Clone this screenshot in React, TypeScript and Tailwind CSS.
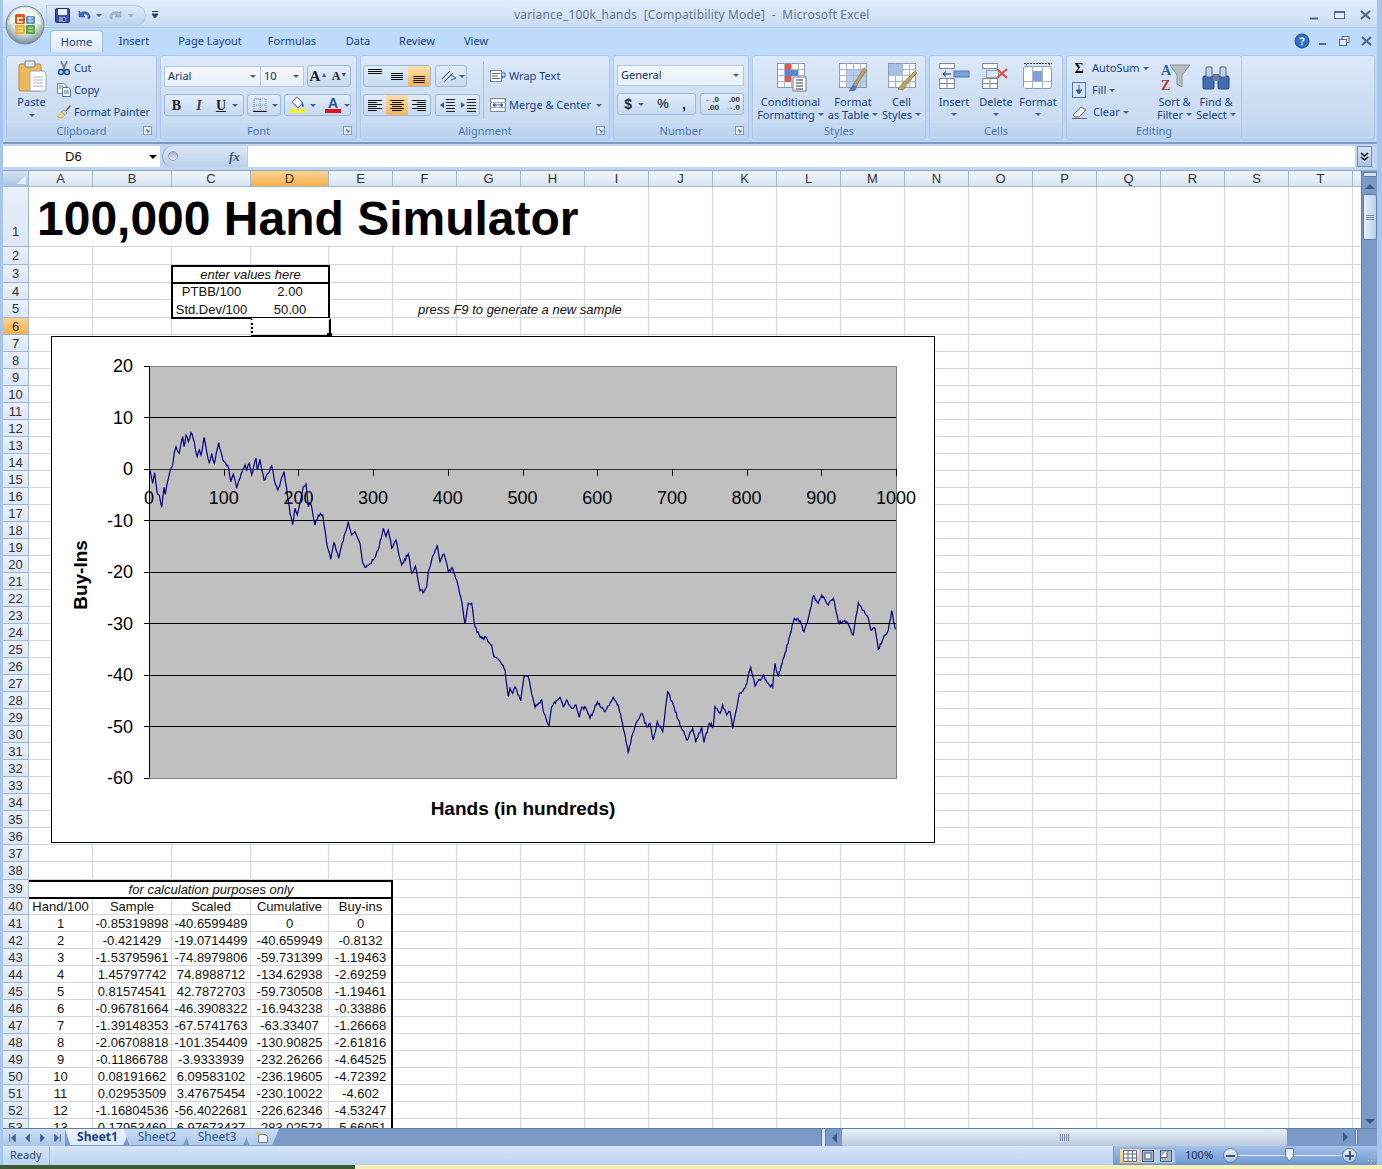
import type { ReactNode } from "react";

const UI = "[font-family:'Noto_Sans',sans-serif]";
const COLS: [string, number][] = [
  ["A", 64], ["B", 79], ["C", 79], ["D", 78], ["E", 64], ["F", 64], ["G", 64], ["H", 64], ["I", 64], ["J", 64],
  ["K", 64], ["L", 64], ["M", 64], ["N", 64], ["O", 64], ["P", 64], ["Q", 64], ["R", 64], ["S", 64], ["T", 64],
];

const rowHeight = (r: number) => {
  if (r === 1) return 60;
  if ([2, 3, 5, 38, 39].includes(r)) return 18;
  return 17;
};

const TABLE: string[][] = [
  ["1", "-0.85319898", "-40.6599489", "0", "0"],
  ["2", "-0.421429", "-19.0714499", "-40.659949", "-0.8132"],
  ["3", "-1.53795961", "-74.8979806", "-59.731399", "-1.19463"],
  ["4", "1.45797742", "74.8988712", "-134.62938", "-2.69259"],
  ["5", "0.81574541", "42.7872703", "-59.730508", "-1.19461"],
  ["6", "-0.96781664", "-46.3908322", "-16.943238", "-0.33886"],
  ["7", "-1.39148353", "-67.5741763", "-63.33407", "-1.26668"],
  ["8", "-2.06708818", "-101.354409", "-130.90825", "-2.61816"],
  ["9", "-0.11866788", "-3.9333939", "-232.26266", "-4.64525"],
  ["10", "0.08191662", "6.09583102", "-236.19605", "-4.72392"],
  ["11", "0.02953509", "3.47675454", "-230.10022", "-4.602"],
  ["12", "-1.16804536", "-56.4022681", "-226.62346", "-4.53247"],
  ["13", "0.17953469", "6.97673437", "-283.02573", "-5.66051"],
];

const cellText: Record<string, string> = {
  C4: "PTBB/100", D4: "2.00", C5: "Std.Dev/100", D5: "50.00",
  A40: "Hand/100", B40: "Sample", C40: "Scaled", D40: "Cumulative", E40: "Buy-ins",
};
TABLE.forEach((row, i) => row.forEach((v, c) => (cellText["ABCDE"[c] + (41 + i)] = v)));

// zoomed trace of the series, left part (x = 140 + zx/3, y = 400 + zy/3)
const LEFT = [30,210,38,250,44,218,52,280,58,285,65,322,72,262,76,283,84,240,92,205,98,195,103,158,108,140,118,160,128,110,132,140,138,105,145,125,153,98,160,118,172,170,178,150,183,165,192,112,200,155,208,188,215,160,223,190,236,128,248,178,266,205,272,245,280,222,290,265,300,235,315,195,320,210,328,190,335,225,348,175,352,210,360,178,372,240,385,220,395,198,403,240,413,272,432,215,440,265,450,340,458,375,465,325,472,345,482,300,490,260,498,252,505,320,512,310,525,375,535,345,548,345,562,440,572,478,582,428,596,475,615,400,625,365,635,405,645,395,652,412,660,430,668,490,678,502,700,480,715,450,730,385,738,410,745,390,755,445,768,420,778,470,785,495,805,462,815,520,826,498,840,572,852,575,860,560,865,515,880,465,892,435,900,485,912,462,925,515,938,505,950,540,962,590,975,672,985,610,995,610,1005,680,1020,712,1040,715,1055,735,1062,770,1075,778];
// right part (x = 500 + zx/3, y = 580 + zy/3)
const RIGHT = [0,243,15,270,25,350,30,325,38,340,45,320,62,362,72,290,85,290,92,325,105,382,125,360,130,395,147,440,155,380,180,352,190,380,200,360,215,385,228,375,238,412,245,382,258,385,270,415,280,395,292,365,315,395,340,352,355,375,365,420,385,520,395,470,408,430,425,400,440,440,450,430,460,480,472,425,488,455,503,335,520,375,540,435,562,480,578,445,587,487,605,440,612,487,628,430,640,440,645,380,660,400,668,375,680,405,690,395,698,445,710,385,718,340,735,325,752,262,765,318,790,285,805,310,818,322,825,250,835,290,855,220,870,165,883,115,900,122,912,155,925,115,940,48,955,70,965,45,985,75,1000,55,1015,125,1040,125,1060,165,1075,68,1095,100,1105,115,1112,150,1125,145,1135,208,1150,175,1165,150,1175,92,1186,148];

function tracePoints() {
  const raw: [number, number][] = [];
  for (let i = 0; i < LEFT.length; i += 2) raw.push([140 + LEFT[i] / 3, 400 + LEFT[i + 1] / 3]);
  for (let i = 0; i < RIGHT.length; i += 2) raw.push([500 + RIGHT[i] / 3, 580 + RIGHT[i + 1] / 3]);
  let seed = 7;
  const out: string[] = [];
  raw.forEach(([x, y], i) => {
    const next = raw[i + 1];
    out.push(`${(x - 52).toFixed(1)},${(y - 337).toFixed(1)}`);
    if (!next) return;
    const steps = Math.floor((next[0] - x) / 0.9);
    for (let s = 1; s < steps; s++) {
      seed = (seed * 16807) % 2147483647;
      const t = s / steps;
      const j = ((seed % 100) / 100 - 0.5) * 3.4;
      out.push(`${(x + (next[0] - x) * t - 52).toFixed(1)},${(y + (next[1] - y) * t + j - 337).toFixed(1)}`);
    }
  });
  return out.join(" ");
}

function Caret({ className = "" }: { className?: string }) {
  return <span className={`inline-block w-0 h-0 border-x-[3px] border-x-transparent border-t-[3px] border-t-[#46618a] ${className}`} />;
}

function Group({ width, label, launcher = true, children }: { width: number; label: string; launcher?: boolean; children: ReactNode }) {
  return (
    <div style={{ width }} className="h-[85px] shrink-0 flex flex-col rounded-[3px] border border-[#b0c8e6] bg-gradient-to-b from-[#dce9f9] via-[#cfdff3] to-[#c6daf2] overflow-hidden">
      <div className="h-[68px] relative flex">{children}</div>
      <div className="h-[16px] pt-[1px] relative flex items-center justify-center bg-gradient-to-b from-[#c4d9f1] to-[#bcd3ee] text-[11px] text-[#4a76ad]">
        {label}
        {launcher && (
          <svg width="9" height="9" viewBox="0 0 9 9" className="absolute right-[4px] top-[3px]">
            <rect x=".5" y=".5" width="8" height="8" fill="#e8f0fa" stroke="#7f99ba" />
            <path d="M3 3l3 3M6 3.8V6H3.8" fill="none" stroke="#44628c" />
          </svg>
        )}
      </div>
    </div>
  );
}

function SmallBtnGroup({ width, children, className = "" }: { width: number; children: ReactNode; className?: string }) {
  return (
    <div style={{ width }} className={`h-[22px] flex items-center rounded-[3px] border border-[#9fb9d8] bg-gradient-to-b from-[#e2edfa] to-[#c6d9f0] overflow-hidden ${className}`}>
      {children}
    </div>
  );
}

function Lines({ y, x, w = 14, stroke = "#111" }: { y: number[]; x: number[]; w?: number; stroke?: string }) {
  return (
    <svg width="16" height="16" viewBox="0 0 16 16">
      {y.map((yy, i) => (
        <path key={i} d={`M${x[i]} ${yy + 0.5}h${w}`} stroke={stroke} />
      ))}
    </svg>
  );
}

function AlignIcon({ mode, active = false }: { mode: string; active?: boolean }) {
  const map: Record<string, ReactNode> = {
    top: <Lines y={[1, 3, 5]} x={[1, 1, 1]} />,
    mid: <Lines y={[5, 7, 9, 11]} x={[2, 2, 2, 2]} w={12} />,
    bot: <Lines y={[8, 10, 12, 14]} x={[2, 2, 2, 2]} w={12} />,
    left: <svg width="16" height="16" viewBox="0 0 16 16"><path d="M1 3.5h14M1 5.5h9M1 7.5h14M1 9.5h9M1 11.5h14M1 13.5h9" stroke="#111" /></svg>,
    center: <svg width="16" height="16" viewBox="0 0 16 16"><path d="M1 3.5h14M3 5.5h10M1 7.5h14M3 9.5h10M1 11.5h14M3 13.5h10" stroke="#111" /></svg>,
    right: <svg width="16" height="16" viewBox="0 0 16 16"><path d="M1 3.5h14M6 5.5h9M1 7.5h14M6 9.5h9M1 11.5h14M6 13.5h9" stroke="#111" /></svg>,
  };
  return (
    <div className={`w-[22px] h-full flex items-center justify-center ${active ? "bg-gradient-to-b from-[#fde0a8] to-[#fbb355]" : ""}`}>{map[mode]}</div>
  );
}

function Orb() {
  return (
    <svg width="44" height="44" viewBox="0 0 44 44">
      <defs>
        <radialGradient id="orb" cx="50%" cy="38%" r="60%">
          <stop offset="0" stopColor="#fbfcf8" />
          <stop offset=".55" stopColor="#dfe7de" />
          <stop offset="1" stopColor="#7f8f9c" />
        </radialGradient>
      </defs>
      <circle cx="22" cy="22" r="19" fill="url(#orb)" stroke="#6f8aa8" />
      <path d="M5 22a17 17 0 0 1 34 0c-8-4-26-4-34 0z" fill="#fff" opacity=".45" />
      <rect x="12" y="11" width="10" height="10" rx="1.5" fill="#d9541e" />
      <rect x="23" y="13" width="9" height="8" rx="1" fill="#5e93cf" />
      <rect x="12" y="22" width="10" height="9" rx="1" fill="#e8b23a" />
      <rect x="23" y="22" width="9" height="9" rx="1" fill="#56a64a" />
      <path d="M14 14h6v2h-4v2h4v2h-6z" fill="#f7d9a0" />
      <path d="M25 15h5M25 18h5M27 14v6M15 25h5M15 28h5M25 25h5M25 28h5" stroke="#fff" opacity=".75" />
    </svg>
  );
}

function TitleBar() {
  return (
    <div className="h-[28px] relative flex items-center bg-gradient-to-b from-[#e3edfb] via-[#d6e4f7] to-[#c9dcf4] border-b border-[#aac5e6]">
      <div className="absolute left-[43px] top-[5px] h-[21px] w-[100px] rounded-r-full rounded-l-[10px] bg-gradient-to-b from-[#dde9f9] to-[#bdd3ef] border border-[#b5cbe6] flex items-center pl-[8px]">
        <svg width="15" height="15" viewBox="0 0 15 15">
          <rect x=".5" y=".5" width="14" height="14" rx="1" fill="#3d4fa6" stroke="#23306e" />
          <rect x="3" y="1" width="9" height="6" fill="#e9eefc" />
          <rect x="4" y="9" width="7" height="5" fill="#8a98c8" />
          <rect x="8" y="10" width="2" height="3" fill="#283571" />
        </svg>
        <svg width="16" height="15" viewBox="0 0 16 15" className="ml-[6px]">
          <path d="M3 3v6h6L7 7c2-2 5-1 5 2v2l2-1c1-5-5-8-9-5z" fill="#3f6fc0" stroke="#2a4f95" strokeWidth=".6" />
        </svg>
        <Caret className="ml-[4px]" />
        <svg width="16" height="15" viewBox="0 0 16 15" className="ml-[6px]">
          <path d="M13 3v6H7l2-2C7 5 4 6 4 9v2L2 10C1 5 7 2 11 5z" fill="#a9b9cf" stroke="#8e9fb8" strokeWidth=".6" />
        </svg>
        <Caret className="ml-[4px] opacity-40" />
      </div>
      <svg width="9" height="10" viewBox="0 0 9 10" className="absolute left-[148px] top-[10px]">
        <path d="M1 1.5h6M1 4h6L4 8z" stroke="#2a3f66" fill="#2a3f66" />
      </svg>
      <div className={`absolute left-[511px] top-[6px] text-[12px] leading-[18px] tracking-[0.17px] whitespace-pre text-[#66778f] ${UI}`}>
        variance_100k_hands  [Compatibility Mode]  -  Microsoft Excel
      </div>
      <div className="ml-auto mr-[6px] mt-[2px] flex items-center gap-[15px] text-[#4a5d78]">
        <svg width="10" height="10" viewBox="0 0 10 10"><path d="M1 7.5h8v2H1z" fill="#53688a" /></svg>
        <svg width="11" height="10" viewBox="0 0 11 10"><rect x=".5" y="1.5" width="10" height="7" fill="#e8eef7" stroke="#53688a" /><path d="M0 2h11" stroke="#53688a" strokeWidth="2" /></svg>
        <svg width="11" height="10" viewBox="0 0 11 10"><path d="M1 1l9 8M10 1L1 9" stroke="#53688a" strokeWidth="2.2" /></svg>
      </div>
    </div>
  );
}

function TabStrip() {
  const tabs: [string, number][] = [["Insert", 62], ["Page Layout", 90], ["Formulas", 74], ["Data", 58], ["Review", 60], ["View", 58]];
  return (
    <div className="h-[24px] flex items-end bg-[#bfdbfb] pl-[47px] pr-[5px]">
      <div className="w-[53px] h-[22px] pt-[1px] flex items-center justify-center rounded-t-[3px] border border-b-0 border-[#9abbe3] bg-gradient-to-b from-[#f3f8fe] to-[#dde9f8] text-[11px] text-[#15428b]">Home</div>
      {tabs.map(([t, w]) => (
        <div key={t} style={{ width: w }} className="h-[22px] pt-[1px] flex items-center justify-center text-[11px] text-[#15428b]">{t}</div>
      ))}
      <div className="ml-auto mb-[3px] flex items-center gap-[11px]">
        <svg width="16" height="16" viewBox="0 0 16 16" className="-mr-[3px]">
          <circle cx="8" cy="8" r="7" fill="#2f6fc4" stroke="#1c4d96" />
          <path d="M6 6.2C6 4.6 10 4.6 10 6.4c0 1.4-2 1.4-2 3M8 10.6v1.6" fill="none" stroke="#fff" strokeWidth="1.5" />
        </svg>
        <svg width="10" height="10" viewBox="0 0 10 10"><path d="M1 7h7v2H1z" fill="#53688a" /></svg>
        <svg width="11" height="10" viewBox="0 0 11 10"><rect x="3" y=".5" width="7" height="6" fill="#e8eef7" stroke="#53688a" /><rect x=".5" y="3.5" width="7" height="6" fill="#e8eef7" stroke="#53688a" /></svg>
        <svg width="11" height="10" viewBox="0 0 11 10"><path d="M1 1l9 8M10 1L1 9" stroke="#53688a" strokeWidth="2.2" /></svg>
      </div>
    </div>
  );
}

function BigBtn({ width, icon, top, bottom, caretBottom = true }: { width: number; icon: ReactNode; top: string; bottom?: string; caretBottom?: boolean }) {
  return (
    <div style={{ width }} className="flex flex-col items-center shrink-0 text-[11px] leading-[13px] text-[#15428b]">
      <div className="h-[39px] pt-[3px] flex items-center justify-center">{icon}</div>
      <div className="whitespace-nowrap">{top}</div>
      <div className="flex items-center gap-[3px] whitespace-nowrap">
        {bottom}
        {caretBottom && <Caret className={bottom ? "" : "mt-[5px]"} />}
      </div>
    </div>
  );
}

const gridIcon = (extra: ReactNode) => (
  <svg width="32" height="30" viewBox="0 0 32 30">
    <rect x="2.5" y="1.5" width="27" height="24" fill="#fff" stroke="#8d9bb2" />
    <path d="M2.5 7.5h27M2.5 13.5h27M2.5 19.5h27M9.5 1.5v24M16.5 1.5v24M23.5 1.5v24" stroke="#aab6c8" />
    {extra}
  </svg>
);

function Ribbon() {
  return (
    <div className="h-[92px] flex gap-[3px] pl-[3px] pr-[2px] pt-[3px] bg-gradient-to-b from-[#bfdbfb] to-[#bad5f7] border-b-2 border-[#7f9bbd]">
      <Group width={151} label="Clipboard">
        <div className="w-[49px] shrink-0 flex flex-col items-center text-[11px] leading-[13px] text-[#15428b]">
          <svg width="30" height="34" viewBox="0 0 30 34" className="mt-[4px]">
            <rect x="2" y="4" width="22" height="27" rx="2" fill="#eeb95c" stroke="#b8873a" />
            <rect x="8" y="1" width="10" height="6" rx="1" fill="#dfe6ee" stroke="#7d7f85" />
            <path d="M13 11h14l2 3v17H13z" fill="#fff" stroke="#9aa6b8" />
            <path d="M16 17h10M16 20h10M16 23h10M16 26h10" stroke="#aab4c4" />
          </svg>
          <div className="mt-[1px]">Paste</div>
          <Caret className="mt-[6px]" />
        </div>
        <div className="pt-[1px] text-[11px] tracking-[-0.1px] text-[#15428b] flex flex-col">
          {[
            ["Cut", <svg key="a" width="16" height="16" viewBox="0 0 16 16"><path d="M5 1l4 9M11 1L7 10" stroke="#6a7380" strokeWidth="1.6" /><circle cx="5" cy="12" r="2.4" fill="none" stroke="#2f4f9a" strokeWidth="1.6" /><circle cx="11" cy="12" r="2.4" fill="none" stroke="#2f4f9a" strokeWidth="1.6" /></svg>],
            ["Copy", <svg key="b" width="16" height="16" viewBox="0 0 16 16"><path d="M1.5 1.5h7l2 2v8h-9z" fill="#fff" stroke="#6f8ab0" /><path d="M6.5 5.5h6l2 2v7h-8z" fill="#f6fafe" stroke="#4772ad" /><path d="M3 4h4M3 6h2M8 9h5M8 11h5" stroke="#4772ad" /></svg>],
            ["Format Painter", <svg key="c" width="16" height="16" viewBox="0 0 16 16"><path d="M9 7l5-6 1 1-5 6z" fill="#7a5a35" /><path d="M8 6l3 3-2 2-4-3z" fill="#c8cfd8" stroke="#7b828c" strokeWidth=".5" /><path d="M5 8l4 3-3 3c-2 0-4-1-5-1 2-1 3-3 4-5z" fill="#f0d27c" stroke="#b8953c" strokeWidth=".5" /></svg>],
          ].map(([t, ic]) => (
            <div key={t as string} className="h-[22px] flex items-center gap-[2px] whitespace-nowrap">
              {ic}
              <span>{t}</span>
            </div>
          ))}
        </div>
      </Group>

      <Group width={197} label="Font">
        <div className="pl-[3px] pt-[9px] flex flex-col gap-[7px]">
          <div className="flex items-center">
            <div className="w-[97px] h-[21px] flex items-center pl-[3px] pr-[4px] border border-[#b3c8e2] bg-gradient-to-b from-[#f4f8fd] to-[#e8f0fa] text-[11px] text-[#15315f]">
              <span>Arial</span>
              <Caret className="ml-auto" />
            </div>
            <div className="w-[43px] h-[21px] flex items-center pl-[3px] pr-[4px] border border-l-0 border-[#b3c8e2] bg-gradient-to-b from-[#f4f8fd] to-[#e8f0fa] text-[11px] text-[#15315f]">
              10
              <Caret className="ml-auto" />
            </div>
            <SmallBtnGroup width={44} className="ml-[3px]">
              <div className="w-[22px] text-center [font-family:'Liberation_Serif',serif] font-bold text-[15px] text-[#222]">A<sup className="text-[7px] text-[#35598f]">▲</sup></div>
              <div className="w-[22px] text-center [font-family:'Liberation_Serif',serif] font-bold text-[12px] text-[#222]">A<sup className="text-[7px] text-[#35598f]">▼</sup></div>
            </SmallBtnGroup>
          </div>
          <div className="flex items-center">
            <SmallBtnGroup width={80} className="text-[#222]">
              <div className="w-[23px] text-center [font-family:'Liberation_Serif',serif] font-bold text-[14px]">B</div>
              <div className="w-[22px] text-center [font-family:'Liberation_Serif',serif] italic font-bold text-[14px] text-[#444]">I</div>
              <div className="w-[22px] text-center [font-family:'Liberation_Serif',serif] font-bold underline text-[14px]">U</div>
              <Caret />
            </SmallBtnGroup>
            <SmallBtnGroup width={34} className="ml-[3px] pl-[5px] gap-[5px]">
              <svg width="14" height="14" viewBox="0 0 14 14"><rect x="1" y="1" width="12" height="12" fill="none" stroke="#7a8696" strokeDasharray="1 1" /><path d="M7 1v12M1 7h12" stroke="#7a8696" strokeDasharray="1 1" /><path d="M0 13.5h14" stroke="#111" /></svg>
              <Caret />
            </SmallBtnGroup>
            <SmallBtnGroup width={67} className="ml-[3px] pl-[4px]">
              <svg width="18" height="18" viewBox="0 0 18 18"><path d="M8 1l6 6-5 5-6-6z" fill="#fff" stroke="#5c6f8c" /><path d="M12 6c2 1 3 3 3 4s-2 1-2 0z" fill="#2f6fb8" /><rect x="1" y="13" width="15" height="4" fill="#f6ec2a" /></svg>
              <Caret className="ml-[3px]" />
              <div className="ml-[9px] w-[16px] flex flex-col items-center leading-[12px] text-[14px] font-bold text-[#2f4f9a] [font-family:'Liberation_Sans',sans-serif]">
                A
                <span className="block w-[16px] h-[4px] bg-[#e01020]" />
              </div>
              <Caret className="ml-[3px]" />
            </SmallBtnGroup>
          </div>
        </div>
      </Group>

      <Group width={250} label="Alignment">
        <div className="pl-[2px] pt-[9px] flex flex-col gap-[7px]">
          <div className="flex">
            <SmallBtnGroup width={68}>
              <AlignIcon mode="top" />
              <AlignIcon mode="mid" />
              <AlignIcon mode="bot" active />
            </SmallBtnGroup>
            <SmallBtnGroup width={32} className="ml-[4px] pl-[4px] gap-[2px]">
              <svg width="17" height="16" viewBox="0 0 17 16"><path d="M2 11L10 3M4 14l9-9" stroke="#333" /><path d="M11 7l5 3-5 2" fill="none" stroke="#2f5fa8" /></svg>
              <Caret />
            </SmallBtnGroup>
          </div>
          <div className="flex">
            <SmallBtnGroup width={68}>
              <AlignIcon mode="left" />
              <AlignIcon mode="center" active />
              <AlignIcon mode="right" />
            </SmallBtnGroup>
            <SmallBtnGroup width={45} className="ml-[4px] pl-[3px] gap-[4px]">
              <svg width="17" height="16" viewBox="0 0 17 16"><path d="M7 2.5h9M7 5.5h9M7 8.5h9M7 11.5h9M7 14.5h9" stroke="#222" /><path d="M5 5L1 8l4 3z" fill="#2f5fa8" /></svg>
              <svg width="17" height="16" viewBox="0 0 17 16"><path d="M7 2.5h9M7 5.5h9M7 8.5h9M7 11.5h9M7 14.5h9" stroke="#222" /><path d="M1 5l4 3-4 3z" fill="#2f5fa8" /></svg>
            </SmallBtnGroup>
          </div>
        </div>
        <div className="w-px h-[58px] mt-[5px] ml-[3px] bg-[#a9c1dd]" />
        <div className="pl-[6px] pt-[9px] flex flex-col gap-[7px] text-[11px] text-[#15428b] whitespace-nowrap">
          <div className="h-[22px] flex items-center gap-[3px]">
            <svg width="16" height="16" viewBox="0 0 16 16"><rect x=".5" y="2.5" width="11" height="11" fill="#fff" stroke="#7c8797" /><path d="M2 5.5h8M2 8h6M2 10.5h8" stroke="#5b6675" /><path d="M12 5h3v4h-3M13 8l-2 1 2 1" fill="none" stroke="#2f5fa8" /></svg>
            Wrap Text
          </div>
          <div className="h-[22px] flex items-center gap-[3px]">
            <svg width="16" height="16" viewBox="0 0 16 16"><rect x=".5" y="1.5" width="15" height="13" fill="#fff" stroke="#7c8797" /><path d="M.5 5.5h15M.5 10.5h15" stroke="#9ba6b6" /><path d="M3 8h10M3 8l2-1.500v3zM13 8l-2-1.500v3z" stroke="#2f5fa8" fill="#2f5fa8" /></svg>
            Merge &amp; Center
            <Caret className="ml-[2px]" />
          </div>
        </div>
      </Group>

      <Group width={136} label="Number">
        <div className="pl-[3px] pt-[9px] flex flex-col gap-[7px]">
          <div className="w-[127px] h-[21px] flex items-center pl-[3px] pr-[4px] border border-[#b3c8e2] bg-gradient-to-b from-[#f4f8fd] to-[#e8f0fa] text-[11px] text-[#15315f]">
            General
            <Caret className="ml-auto" />
          </div>
          <div className="flex">
            <SmallBtnGroup width={79} className="text-[#222] [font-family:'Liberation_Sans',sans-serif]">
              <div className="w-[22px] text-center font-bold text-[14px]">$</div>
              <Caret />
              <div className="ml-[9px] w-[22px] text-center text-[13px] font-bold text-[#3a4a60]">%</div>
              <div className="w-[24px] text-center text-[14px] font-bold">,</div>
            </SmallBtnGroup>
            <SmallBtnGroup width={44} className="ml-[4px] justify-around text-[8px] leading-[8px] font-bold text-[#333] [font-family:'Liberation_Sans',sans-serif]">
              <div className="text-right"><span className="text-[#2f5fa8]">←</span>.0<br />.00</div>
              <div className="text-right">.00<br /><span className="text-[#2f5fa8]">→</span>.0</div>
            </SmallBtnGroup>
          </div>
        </div>
      </Group>

      <Group width={174} label="Styles" launcher={false}>
        <BigBtn
          width={75}
          top="Conditional"
          bottom="Formatting"
          icon={gridIcon(
            <>
              <rect x="10" y="2" width="6" height="6" fill="#e05a48" />
              <rect x="10" y="8" width="13" height="6" fill="#5b87d6" />
              <rect x="10" y="14" width="6" height="6" fill="#e05a48" />
              <rect x="18" y="15" width="13" height="14" fill="#fff" stroke="#6c7a90" />
              <path d="M21 18h7M21 21h7M21 24h7M21 27h7" stroke="#333" />
            </>,
          )}
        />
        <BigBtn
          width={50}
          top="Format"
          bottom="as Table"
          icon={gridIcon(
            <>
              <rect x="10" y="8" width="19" height="17" fill="#a6c1e8" opacity=".8" />
              <path d="M27 6l3 2-8 11-4 9-6 1 4-6z" fill="#c0a060" stroke="#7a6a45" strokeWidth=".6" />
              <path d="M12 29l4-6 4 2-3 4z" fill="#4a79c8" />
            </>,
          )}
        />
        <BigBtn
          width={47}
          top="Cell"
          bottom="Styles"
          icon={gridIcon(
            <>
              <rect x="3" y="2" width="13" height="12" fill="#a6c1e8" />
              <path d="M29 9l2 2-9 10-5 7-5-1 5-6z" fill="#c0a060" stroke="#7a6a45" strokeWidth=".6" />
            </>,
          )}
        />
      </Group>

      <Group width={134} label="Cells" launcher={false}>
        <BigBtn
          width={48}
          top="Insert"
          icon={
            <svg width="32" height="30" viewBox="0 0 32 30">
              <path d="M1.500 1.500h15v5h-15zM1.500 16.500h15v10h-15zM9 16.500v10M1.500 21.500h15" fill="#fff" stroke="#7d8899" />
              <rect x="16" y="9" width="15" height="6" fill="#7ea3dc" stroke="#4f76b2" />
              <path d="M13 12H5M8 9.500L5 12l3 2.500" fill="none" stroke="#222" />
            </svg>
          }
        />
        <BigBtn
          width={36}
          top="Delete"
          icon={
            <svg width="32" height="30" viewBox="0 0 32 30">
              <path d="M2.500 1.500h15v5h-15zM2.500 16.500h15v10h-15zM10 16.500v10M2.500 21.500h15" fill="#fff" stroke="#7d8899" />
              <rect x="6.500" y="8.500" width="12" height="7" fill="none" stroke="#555" strokeDasharray="1 1" />
              <path d="M17 7l10 9M27 7l-10 9" stroke="#e0503a" strokeWidth="2.200" />
            </svg>
          }
        />
        <BigBtn
          width={48}
          top="Format"
          icon={
            <svg width="32" height="30" viewBox="0 0 32 30">
              <path d="M2 1.500h28M5 1.500l-1 2M27 1.500l1 2" stroke="#333" strokeDasharray="2 1" />
              <rect x="1.500" y="4.500" width="28" height="22" rx="2" fill="#fff" stroke="#8d9bb2" />
              <path d="M10.500 4.500v22M20.500 4.500v22M1.500 19.500h28" stroke="#aab6c8" />
              <rect x="11" y="9" width="9" height="10" fill="#7ea3dc" />
            </svg>
          }
        />
      </Group>

      <Group width={176} label="Editing" launcher={false}>
        <div className="w-[87px] pl-[5px] pt-[1px] shrink-0 flex flex-col text-[11px] text-[#15428b] whitespace-nowrap">
          <div className="h-[22px] flex items-center gap-[3px]">
            <span className="w-[14px] text-center font-bold text-[14px] text-[#111] [font-family:'Liberation_Serif',serif]">Σ</span>
            <span className="ml-[3px]">AutoSum</span>
            <Caret />
          </div>
          <div className="h-[22px] flex items-center gap-[3px]">
            <svg width="14" height="16" viewBox="0 0 14 16"><rect x=".5" y=".5" width="13" height="15" fill="#d6e5f9" stroke="#4f76b2" /><path d="M7 3v7M4 8l3 4 3-4z" stroke="#2f5fa8" fill="#2f5fa8" /></svg>
            <span className="ml-[3px]">Fill</span>
            <Caret />
          </div>
          <div className="h-[22px] flex items-center gap-[3px]">
            <svg width="15" height="14" viewBox="0 0 15 14"><path d="M1 10l8-8 5 3-7 7H3z" fill="#f1f3f6" stroke="#5e6877" /><path d="M0 13.500h15" stroke="#5e6877" /></svg>
            <span className="ml-[3px]">Clear</span>
            <Caret />
          </div>
        </div>
        <BigBtn
          width={41}
          top="Sort &"
          bottom="Filter"
          icon={
            <svg width="32" height="30" viewBox="0 0 32 30">
              <path d="M11 3h20l-8 10v12l-5-3v-9z" fill="#b8bcc2" stroke="#8a8f96" />
              <text x="2" y="13" fontSize="14" fontWeight="700" fill="#2f5fa8" fontFamily="Liberation Serif, serif">A</text>
              <text x="2" y="28" fontSize="14" fontWeight="700" fill="#b03a3a" fontFamily="Liberation Serif, serif">Z</text>
            </svg>
          }
        />
        <BigBtn
          width={42}
          top="Find &"
          bottom="Select"
          icon={
            <svg width="30" height="28" viewBox="0 0 30 28">
              <rect x="2" y="13" width="11" height="13" rx="1.500" fill="#3f6fb0" stroke="#24467d" />
              <rect x="17" y="13" width="11" height="13" rx="1.500" fill="#3f6fb0" stroke="#24467d" />
              <rect x="5" y="4" width="6" height="10" rx="1" fill="#c7d4e6" stroke="#4a5f80" />
              <rect x="19" y="4" width="6" height="10" rx="1" fill="#c7d4e6" stroke="#4a5f80" />
              <rect x="12" y="11" width="6" height="7" fill="#6b7f9c" />
            </svg>
          }
        />
      </Group>
      <div className="flex-1 h-[85px] -ml-[3px] rounded-r-[3px] border border-l-0 border-[#b0c8e6] bg-gradient-to-b from-[#dce9f9] via-[#cfdff3] to-[#bdd4ef]" />
    </div>
  );
}

function FormulaBar() {
  return (
    <div className="h-[27px] pt-[2px] flex items-start pr-[5px] bg-[#bfd5f0] border-b border-[#8ba7c8]">
      <div className="h-[21px] w-[157px] flex items-center bg-white relative [font-family:'Liberation_Sans',sans-serif] text-[13px] text-[#111]">
        <span className="absolute left-[62px]">D6</span>
        <span className="absolute left-[146px] top-[9px] w-0 h-0 border-x-[4px] border-x-transparent border-t-[4px] border-t-black" />
      </div>
      <div className="h-[21px] w-[85px] ml-[2px] relative rounded-l-full bg-gradient-to-b from-[#dbe7f7] to-[#bcd0ea] border-l border-[#8ba7c8]">
        <span className="absolute left-[5px] top-[5px] w-[10px] h-[10px] rounded-full bg-gradient-to-b from-[#a5adb8] to-[#e6ebf2] border border-[#93a0b1]" />
        <span className="absolute left-[66px] top-[1px] [font-family:'Liberation_Serif',serif] italic font-bold text-[13px] text-[#44566e]">fx</span>
      </div>
      <div className="h-[21px] flex-1 bg-white border-l border-[#bcd0ea]" />
      <div className="h-[21px] w-[15px] ml-[2px] flex items-center justify-center bg-gradient-to-b from-[#dbe7f7] to-[#a9c2e2] border border-[#6f8db5]">
        <svg width="9" height="10" viewBox="0 0 9 10"><path d="M1 1l3.500 3L8 1M1 5l3.500 3L8 5" fill="none" stroke="#111" strokeWidth="1.500" /></svg>
      </div>
    </div>
  );
}

function Sheet() {
  const rows = Array.from({ length: 53 }, (_, i) => i + 1);
  return (
    <div className="flex-1 min-h-0 flex min-w-0">
      <div className="flex-1 min-w-0 relative overflow-hidden bg-white [font-family:'Liberation_Sans',sans-serif] text-[13px] text-[#111]">
        <div className="flex h-[16px] border-b border-[#9eb6ce]">
          <div className="w-[26px] shrink-0 relative bg-gradient-to-b from-[#d4e3f7] to-[#a9c4e8] border-r border-[#9eb6ce]">
            <span className="absolute right-[2px] bottom-[2px] w-0 h-0 border-l-[9px] border-l-transparent border-b-[9px] border-b-[#e8f0fa]" />
          </div>
          {COLS.map(([c, w]) => (
            <div
              key={c}
              style={{ width: w }}
              className={`shrink-0 pt-[1px] flex items-center justify-center border-r border-[#9eb6ce] text-[#333] bg-gradient-to-b ${c === "D" ? "from-[#fbd38e] to-[#f6b04c]" : "from-[#f1f5fb] to-[#d8e4f2]"}`}
            >
              {c}
            </div>
          ))}
          <div className="flex-1 bg-gradient-to-b from-[#f1f5fb] to-[#d8e4f2]" />
        </div>

        {rows.map((r) => {
          const h = rowHeight(r);
          const selected = r === 6;
          return (
            <div key={r} style={{ height: h }} className="flex">
              <div className={`w-[26px] shrink-0 flex justify-center border-r border-b border-[#9eb6ce] text-[#333] ${r === 1 ? "items-end pb-[5px]" : "items-center pt-[1px]"} ${selected ? "bg-gradient-to-b from-[#fbd38e] to-[#f6b04c]" : "bg-gradient-to-b from-[#e9f0fa] to-[#dde7f5]"}`}>
                {r}
              </div>
              {r === 1 ? (
                <div style={{ width: 556 }} className="shrink-0 border-b border-[#d0d7e5] pl-[8px] pt-[2px] font-bold text-[48px] leading-[60px] text-black whitespace-nowrap">
                  100,000 Hand Simulator
                </div>
              ) : null}
              {r === 3 ? (
                <>
                  <div style={{ width: 143 }} className="shrink-0 flex">
                    <div style={{ width: 64 }} className="border-r border-b border-[#d0d7e5]" />
                    <div style={{ width: 79 }} className="border-r border-b border-[#d0d7e5]" />
                  </div>
                  <div style={{ width: 157 }} className="shrink-0 pt-[1px] flex items-center justify-center italic">enter values here</div>
                </>
              ) : null}
              {r === 39 ? (
                <div style={{ width: 364 }} className="shrink-0 pt-[1px] flex items-center justify-center italic">for calculation purposes only</div>
              ) : null}
              {COLS.map(([c, w], ci) => {
                if (r === 1 && ci < 8) return null;
                if (r === 3 && ci < 4) return null;
                if (r === 39 && ci < 5) return null;
                const boxed = (r === 4 || r === 5) && (c === "C" || c === "D");
                return (
                  <div
                    key={c}
                    style={{ width: w }}
                    className={`shrink-0 pt-[1px] flex items-center justify-center whitespace-nowrap ${boxed ? "" : "border-r border-b border-[#d0d7e5]"}`}
                  >
                    {cellText[c + r]}
                  </div>
                );
              })}
              <div className="flex-1 border-b border-[#d0d7e5]" />
            </div>
          );
        })}

        {/* outlines and floating things that sit over the cells */}
        <div className="absolute left-[168px] top-[94px] w-[159px] h-[54px] border-2 border-black pointer-events-none">
          <div className="h-[17px] border-b-2 border-black" />
        </div>
        <div className="absolute left-[415px] top-[130px] italic text-[13px] leading-[17px] whitespace-nowrap">press F9 to generate a new sample</div>
        <div className="absolute left-[248px] top-[147px] w-[80px] h-[19px] border-2 border-black [border-left-style:dotted] border-t-white">
          <span className="absolute -right-[3px] -bottom-[3px] w-[5px] h-[5px] bg-black" />
        </div>
        <div className="absolute left-[26px] top-[709px] w-[364px] h-[260px] border-t-2 border-r-2 border-black">
          <div className="h-[17px] border-b-2 border-black" />
        </div>

        <div className="absolute left-[48px] top-[165px] w-[884px] h-[507px] bg-white border border-black">
          <Chart />
        </div>
      </div>

      <div className="w-[16px] shrink-0 flex flex-col items-center bg-[#7b9ac8] border-l border-[#5d7da9]">
        <div className="w-[14px] h-[5px] mt-[1px] rounded-[1px] bg-[#d6e3f4] border border-[#5d7da9]" />
        <span className="mt-[7px] w-0 h-0 border-x-[5px] border-x-transparent border-b-[5px] border-b-[#3a5a88]" />
        <div className="mt-[5px] w-[14px] h-[46px] rounded-[2px] flex flex-col items-center justify-center gap-[1px] bg-gradient-to-r from-[#e6eefa] to-[#bcd0ea] border border-[#5d7da9]">
          <span className="w-[8px] h-px bg-[#7b8da5]" />
          <span className="w-[8px] h-px bg-[#7b8da5]" />
          <span className="w-[8px] h-px bg-[#7b8da5]" />
        </div>
        <span className="mt-auto mb-[4px] w-0 h-0 border-x-[5px] border-x-transparent border-t-[5px] border-t-[#3a5a88]" />
      </div>
    </div>
  );
}

function Chart() {
  const ys = [20, 10, 0, -10, -20, -30, -40, -50, -60];
  const xs = [0, 100, 200, 300, 400, 500, 600, 700, 800, 900, 1000];
  const L = 97, T = 29, W = 747, H = 412;
  return (
    <svg width="882" height="505" viewBox="0 0 882 505" fontFamily="'Liberation Sans', sans-serif">
      <rect x={L + 0.5} y={T + 0.5} width={W} height={H} fill="#c0c0c0" stroke="#808080" />
      {ys.map((v, i) => {
        const y = T + (H / 8) * i;
        return (
          <g key={v}>
            {v !== 20 && v !== -60 && <path d={`M${L} ${Math.floor(y) + 0.5}h${W}`} stroke={v === 0 ? "#333" : "#000"} />}
            <path d={`M${L - 5} ${Math.floor(y) + 0.5}h5`} stroke="#000" />
            <text x={81} y={y + 6} fontSize="18" textAnchor="end" fill="#000">{v}</text>
          </g>
        );
      })}
      <path d={`M${L + 0.5} ${T}v${H}`} stroke="#000" />
      {xs.map((v, i) => {
        const x = L + (W / 10) * i;
        const y0 = T + H / 4;
        return (
          <g key={v}>
            <path d={`M${Math.round(x) + 0.5} ${y0}v7`} stroke="#000" />
            <text x={x} y={y0 + 35} fontSize="18" textAnchor="middle" fill="#000">{v}</text>
          </g>
        );
      })}
      <polyline points={tracePoints()} fill="none" stroke="#000080" strokeWidth="1.2" />
      <text x={471} y={478} fontSize="19" fontWeight="700" textAnchor="middle" fill="#000">Hands (in hundreds)</text>
      <text transform="translate(35 238) rotate(-90)" fontSize="19" fontWeight="700" textAnchor="middle" fill="#000">Buy-Ins</text>
    </svg>
  );
}

function SheetTab({ label, active = false }: { label: string; active?: boolean }) {
  return (
    <div className={`h-[16px] flex items-center justify-center text-[12px] [clip-path:polygon(0_0,100%_0,90%_100%,8%_100%)] ${active ? "w-[65px] bg-gradient-to-b from-[#eaf2fc] to-[#dce8f7] font-bold text-[#15428b]" : "w-[66px] -ml-[6px] bg-gradient-to-b from-[#c9dcf3] to-[#afc9ea] text-[#2c5491]"}`}>
      {label}
    </div>
  );
}

function TabBar() {
  const nav = ["M3 2v8M9 2L5 6l4 4z", "M8 2L4 6l4 4z", "M4 2l4 4-4 4z", "M3 2l4 4-4 4zM9 2v8"];
  return (
    <div className="h-[18px] flex items-start bg-[#7b9ac8] border-t border-[#5d7da9] [font-family:'Noto_Sans',sans-serif]">
      <div className="w-[62px] h-[17px] flex items-center pl-[4px] gap-[4px] bg-gradient-to-b from-[#d0e0f4] to-[#aac5e8]">
        {nav.map((d) => (
          <svg key={d} width="11" height="12" viewBox="0 0 12 12"><path d={d} fill="#3d5f93" stroke="#3d5f93" /></svg>
        ))}
      </div>
      <SheetTab label="Sheet1" active />
      <SheetTab label="Sheet2" />
      <SheetTab label="Sheet3" />
      <div className="h-[16px] w-[35px] -ml-[6px] flex items-center justify-center bg-gradient-to-b from-[#c9dcf3] to-[#afc9ea] [clip-path:polygon(0_0,100%_0,80%_100%,14%_100%)]">
        <svg width="14" height="14" viewBox="0 0 14 14"><path d="M3.500 4.500h7l2 2v6h-9z" fill="#eef3f9" stroke="#6f7f95" /><path d="M3 0l1 2 2 .500-2 1L3 6 2 3.500 0 2.500 2 2z" fill="#f4c040" /></svg>
      </div>
      <div className="flex-1" />
      <div className="h-[17px] w-[5px] bg-[#dce8f7] border-x border-[#5d7da9]" />
      <div className="w-[16px] h-[17px] flex items-center justify-center">
        <span className="w-0 h-0 border-y-[5px] border-y-transparent border-r-[5px] border-r-[#3a5a88]" />
      </div>
      <div className="w-[445px] h-[17px] flex items-center justify-center gap-[1px] bg-gradient-to-b from-[#e9eff7] to-[#bccbdd] rounded-[2px]">
        {[0, 1, 2, 3, 4].map((i) => <span key={i} className="w-px h-[7px] bg-[#7b8da5]" />)}
      </div>
      <div className="w-[56px] h-[17px]" />
      <span className="mt-[3px] mr-[7px] w-0 h-0 border-y-[5px] border-y-transparent border-l-[5px] border-l-[#3a5a88]" />
      <div className="mr-[19px] h-[14px] mt-[1px] w-[3px] bg-[#dce8f7] border-x border-[#5d7da9]" />
    </div>
  );
}

function StatusBar() {
  return (
    <div className={`h-[19px] flex bg-gradient-to-b from-[#d6e5f8] to-[#bcd3ef] text-[11px] text-[#2c4a78] ${UI}`}>
      <div className="w-[47px] pl-[7px] leading-[17px] border-r border-[#9fb8d6]">Ready</div>
      <div className="flex-1" />
      <div className="w-[264px] relative flex items-center bg-gradient-to-b from-[#a4c2ea] to-[#6d96cf] border-l border-[#7b98bd]">
        <div className="ml-[5px] h-[16px] w-[57px] flex rounded-[2px] bg-[#b6cdee] border border-[#8aa8d0]">
          <div className="w-[19px] flex items-center justify-center bg-gradient-to-b from-[#fde6b4] to-[#f8c66f]">
            <svg width="14" height="12" viewBox="0 0 14 12"><path d="M.5.5h13v11H.5zM.5 4h13M.5 8h13M5 .5v11M9.500.5v11" fill="#fff" stroke="#5c6f8c" /></svg>
          </div>
          <div className="w-[18px] flex items-center justify-center">
            <svg width="12" height="12" viewBox="0 0 12 12"><rect x=".5" y=".5" width="11" height="11" fill="#aab7c8" stroke="#4c5d76" /><rect x="3" y="3" width="6" height="6" fill="#e7edf5" stroke="#4c5d76" /></svg>
          </div>
          <div className="w-[18px] flex items-center justify-center">
            <svg width="12" height="12" viewBox="0 0 12 12"><rect x=".5" y=".5" width="11" height="11" fill="#aab7c8" stroke="#4c5d76" /><path d="M7 .5v7H.5" fill="#fff" stroke="#4c5d76" /></svg>
          </div>
        </div>
        <div className="ml-[9px] w-[30px] text-[#15315f]">100%</div>
        <div className="ml-[8px] w-[15px] h-[15px] rounded-full flex items-center justify-center bg-gradient-to-b from-[#f2f6fb] to-[#a9c0df] border border-[#5b7ba6]">
          <span className="w-[9px] h-[2px] bg-[#3d5478]" />
        </div>
        <div className="relative w-[104px] h-[1px] bg-[#dfeafa]">
          <svg width="9" height="14" viewBox="0 0 9 14" className="absolute left-[47px] -top-[7px]">
            <path d="M.5.500h8v8L4.500 13 .5 8.500z" fill="#e8eff8" stroke="#5b7ba6" />
          </svg>
        </div>
        <div className="w-[15px] h-[15px] rounded-full flex items-center justify-center relative bg-gradient-to-b from-[#f2f6fb] to-[#a9c0df] border border-[#5b7ba6]">
          <span className="w-[9px] h-[2px] bg-[#3d5478]" />
          <span className="absolute w-[2px] h-[9px] bg-[#3d5478]" />
        </div>
        <svg width="10" height="10" viewBox="0 0 10 10" className="absolute right-[1px] bottom-[2px]">
          <path d="M8 1h1v1H8zM5 4h1v1H5zM8 4h1v1H8zM2 7h1v1H2zM5 7h1v1H5zM8 7h1v1H8z" fill="#e8f0fa" />
        </svg>
      </div>
    </div>
  );
}

export default function App() {
  return (
    <div className={`w-[1382px] h-[1169px] relative overflow-hidden flex flex-col bg-[#bfdbfb] ${UI}`}>
      <div className="h-[1165px] flex flex-col border-x-[3px] border-[#a8c6ec] border-r-[5px]">
        <TitleBar />
        <TabStrip />
        <Ribbon />
        <FormulaBar />
        <Sheet />
        <TabBar />
        <StatusBar />
      </div>
      <div className="flex-1 flex">
        <div className="w-[355px] bg-[#3d5a30]" />
        <div className="flex-1 bg-[#f6f0b4]" />
      </div>
      <div className="absolute left-[3px] top-[3px]">
        <Orb />
      </div>
    </div>
  );
}
